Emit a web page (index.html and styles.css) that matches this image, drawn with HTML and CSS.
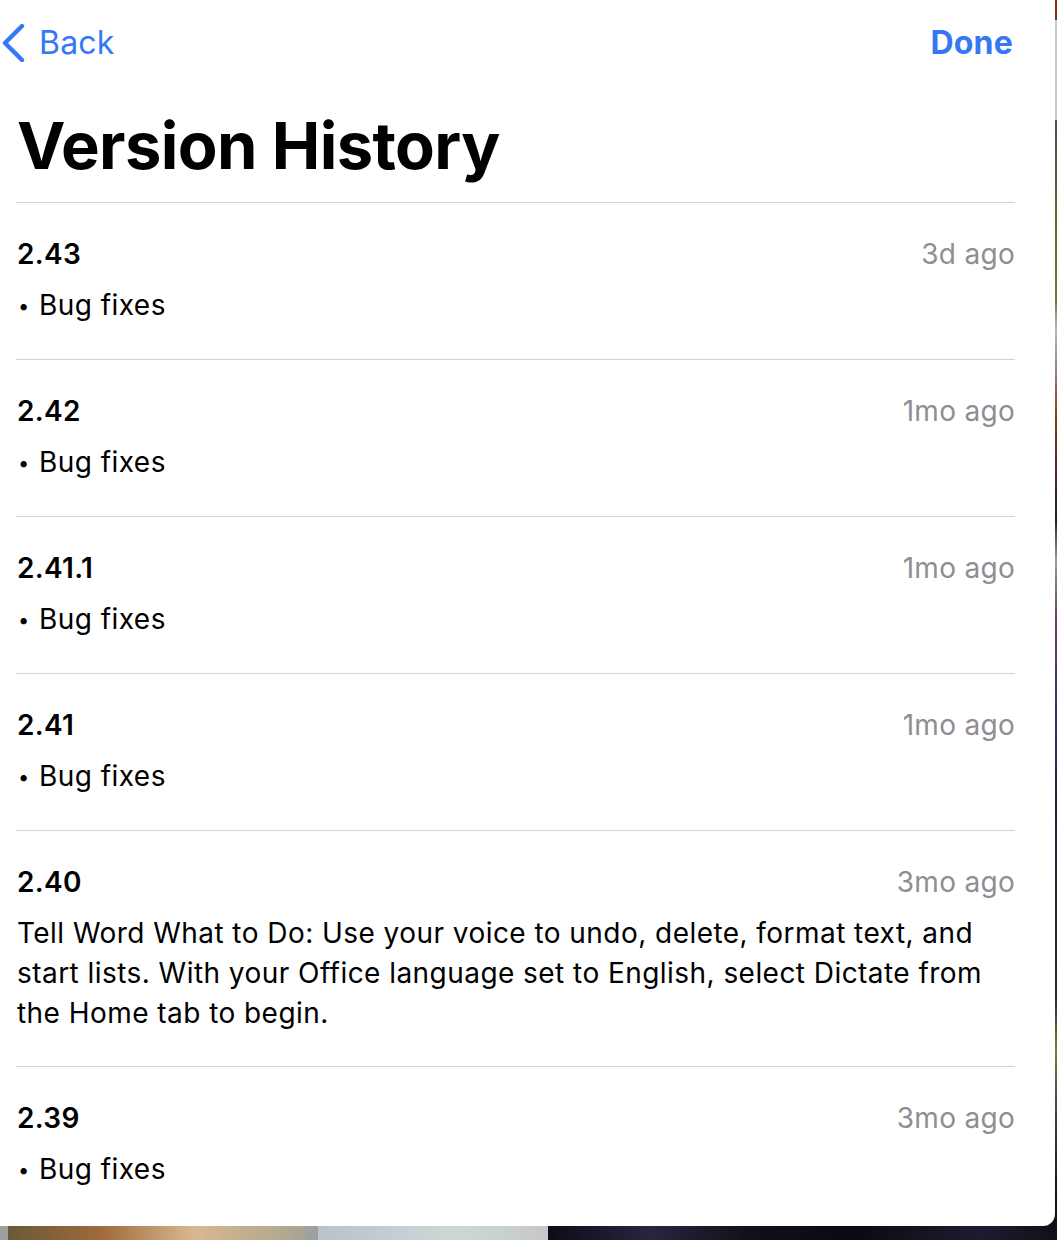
FILE: index.html
```html
<!DOCTYPE html>
<html lang="en">
<head>
    <meta charset="UTF-8">
    <meta name="viewport" content="width=device-width, initial-scale=1.0">
    <title>Version History</title>
    <link rel="stylesheet" href="styles.css">
</head>
<body>
    <div class="backdrop">
        <div class="sheet">
            <div class="nav">
                <a class="back" href="#">
                    <svg class="chevron" width="26" height="40" viewBox="0 0 26 40">
                        <path d="M22 4 L5 21 L22 38" fill="none" stroke="#3478f6" stroke-width="4.4" stroke-linecap="round" stroke-linejoin="round"/>
                    </svg>
                    Back
                </a>
                <a class="done" href="#">Done</a>
            </div>

            <h1>Version History</h1>

            <ul class="versions">
                <li class="version">
                    <div class="version-head">
                        <span class="number">2.43</span>
                        <span class="date">3d ago</span>
                    </div>
                    <p class="notes"><span class="bullet">•</span>Bug fixes</p>
                </li>
                <li class="version">
                    <div class="version-head">
                        <span class="number">2.42</span>
                        <span class="date">1mo ago</span>
                    </div>
                    <p class="notes"><span class="bullet">•</span>Bug fixes</p>
                </li>
                <li class="version">
                    <div class="version-head">
                        <span class="number">2.41.1</span>
                        <span class="date">1mo ago</span>
                    </div>
                    <p class="notes"><span class="bullet">•</span>Bug fixes</p>
                </li>
                <li class="version">
                    <div class="version-head">
                        <span class="number">2.41</span>
                        <span class="date">1mo ago</span>
                    </div>
                    <p class="notes"><span class="bullet">•</span>Bug fixes</p>
                </li>
                <li class="version">
                    <div class="version-head">
                        <span class="number">2.40</span>
                        <span class="date">3mo ago</span>
                    </div>
                    <p class="notes">Tell Word What to Do: Use your voice to undo, delete, format text, and start lists. With your Office language set to English, select Dictate from the Home tab to begin.</p>
                </li>
                <li class="version last">
                    <div class="version-head">
                        <span class="number">2.39</span>
                        <span class="date">3mo ago</span>
                    </div>
                    <p class="notes"><span class="bullet">•</span>Bug fixes</p>
                </li>
            </ul>
        </div>

        <div class="wallpaper">
            <span class="w1"></span>
            <span class="w2"></span>
            <span class="w3"></span>
            <span class="w4"></span>
        </div>
    </div>
</body>
</html>
```

FILE: styles.css
```css
html, body {
    margin: 0;
    padding: 0;
    background: #1a1a24;
}
body {
    font-family: Inter, "Noto Sans", sans-serif;
    color: #000;
    width: 1057px;
    height: 1240px;
    overflow: hidden;
}
.backdrop {
    position: relative;
    height: 1240px;
    background: linear-gradient(to bottom, #8a2a1c 0, #8a2a1c 20px, #c9c9c9 20px, #c9c9c9 120px, #5a4a3a 120px, #6c7a40 300px, #b8b8b8 330px, #7a3a20 420px, #2a1a2a 520px, #9a9a9a 560px, #6a3a6a 620px, #3a2a5a 740px, #1d2240 800px, #2a2a3a 1000px, #6a8a3a 1050px, #4a4a4a 1100px, #101018 1200px);
}
.sheet {
    position: relative;
    z-index: 1;
    width: 1055px;
    height: 1226px;
    background: #fff;
    border-bottom-right-radius: 12px;
    overflow: hidden;
}
.nav {
    display: flex;
    justify-content: space-between;
    align-items: center;
    height: 84px;
    padding: 0 42px 0 0;
}
.nav a {
    text-decoration: none;
    color: #3478f6;
    font-size: 32px;
    letter-spacing: 0.2px;
}
.back {
    display: flex;
    align-items: center;
    gap: 13px;
}
.chevron {
    display: block;
}
.done {
    font-weight: 700;
}
h1 {
    margin: 22px 0 16px 17px;
    font-size: 65px;
    font-weight: 700;
    line-height: 80px;
    letter-spacing: -0.6px;
}
.versions {
    list-style: none;
    margin: 0 40px 0 16px;
    padding: 0;
    border-top: 1px solid #d1d1d6;
}
.version {
    border-bottom: 1px solid #d1d1d6;
    padding: 26px 0 33px 1px;
}
.version.last {
    border-bottom: none;
}
.version-head {
    display: flex;
    justify-content: space-between;
    align-items: baseline;
}
.number {
    font-size: 28px;
    font-weight: 600;
    line-height: 50px;
    letter-spacing: 0.3px;
}
.date {
    font-size: 28px;
    color: #8e8e93;
    letter-spacing: 0.3px;
}
.notes {
    margin: 6px 0 0;
    font-size: 28px;
    line-height: 40px;
    letter-spacing: 0.45px;
}
.bullet {
    display: inline-block;
    width: 21px;
    padding-left: 1px;
    font-size: 20px;
    vertical-align: 2px;
}
.wallpaper {
    position: absolute;
    left: 0;
    right: 0;
    bottom: 0;
    height: 14px;
    display: flex;
}
.wallpaper span {
    display: block;
    height: 100%;
}
.w1 { width: 8px; background: #9aa0a0; }
.w2 { width: 310px; background: linear-gradient(to right, #6a5a3a, #a06a3a 30%, #d8b890 60%, #b0a890 90%, #98a0a0); }
.w3 { width: 230px; background: linear-gradient(to right, #b8c4c8, #d0d6d8 60%, #c4c8ca); }
.w4 { flex: 1; background: linear-gradient(to right, #0c0c18, #2a2440 20%, #101018 40%, #0a0a12 60%, #201a30 85%, #101018); }
```
